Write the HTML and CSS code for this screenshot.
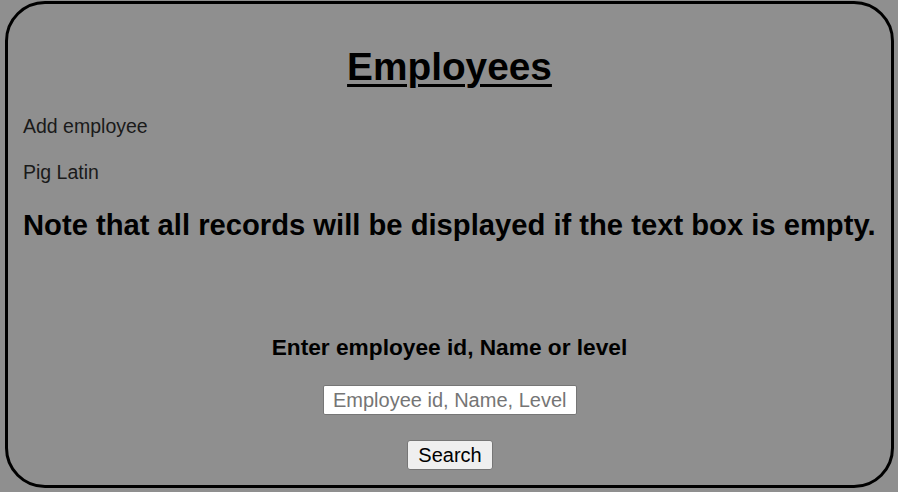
FILE: index.html
```html
<!DOCTYPE html>
<html lang="en">
<head>
<meta charset="utf-8">
<title>Employees</title>
<link rel="stylesheet" href="styles.css">
</head>
<body>
<div class="panel">
  <h1 class="title">Employees</h1>
  <p class="link-line">Add employee</p>
  <p class="link-line link-second">Pig Latin</p>
  <h2 class="note">Note that all records will be displayed if the text box is empty.</h2>
  <h3 class="prompt">Enter employee id, Name or level</h3>
  <div class="field-row">
    <input class="search-input" type="text" placeholder="Employee id, Name, Level">
  </div>
  <div class="button-row">
    <button class="search-button" type="button">Search</button>
  </div>
</div>
</body>
</html>
```
FILE: styles.css
```css
html, body {
  margin: 0;
  padding: 0;
  background: #8f8f8f;
}
body {
  font-family: "Liberation Sans", Arial, sans-serif;
  color: #111;
  padding: 1px 4px 4px 5px;
}
.panel {
  box-sizing: border-box;
  width: 889px;
  height: 487px;
  border: 3px solid #000;
  border-radius: 40px;
  padding: 0 15px;
}
.title {
  margin: 41px 0 0;
  font-size: 38.8px;
  line-height: 44px;
  font-weight: bold;
  text-align: center;
  text-decoration: underline;
  text-decoration-thickness: 3px;
  text-underline-offset: 4px;
  color: #000;
}
.link-line {
  margin: 26px 0 0;
  font-size: 19.5px;
  line-height: 22px;
  color: #1a1a1a;
}
.link-second {
  margin-top: 24px;
}
.note {
  margin: 26px 0 0;
  font-size: 29.2px;
  line-height: 33px;
  font-weight: bold;
  white-space: nowrap;
  color: #000;
}
.prompt {
  margin: 92px 0 0;
  font-size: 22.7px;
  line-height: 26px;
  font-weight: bold;
  text-align: center;
  color: #000;
}
.field-row {
  display: flex;
  justify-content: center;
  margin-top: 25px;
}
.search-input {
  box-sizing: border-box;
  width: 254px;
  height: 30px;
  margin-left: 1px;
  padding: 0 9px;
  border: 1px solid #767676;
  border-radius: 2px;
  background: #fff;
  font-family: "Liberation Sans", Arial, sans-serif;
  font-size: 20px;
  color: #000;
}
.search-input::placeholder {
  color: #757575;
}
.button-row {
  display: flex;
  justify-content: center;
  margin-top: 25px;
}
.search-button {
  box-sizing: border-box;
  width: 86px;
  height: 30px;
  margin-left: 1px;
  padding: 0;
  border: 1px solid #767676;
  border-radius: 3px;
  background: #efefef;
  font-family: "Liberation Sans", Arial, sans-serif;
  font-size: 20px;
  color: #000;
}
```
